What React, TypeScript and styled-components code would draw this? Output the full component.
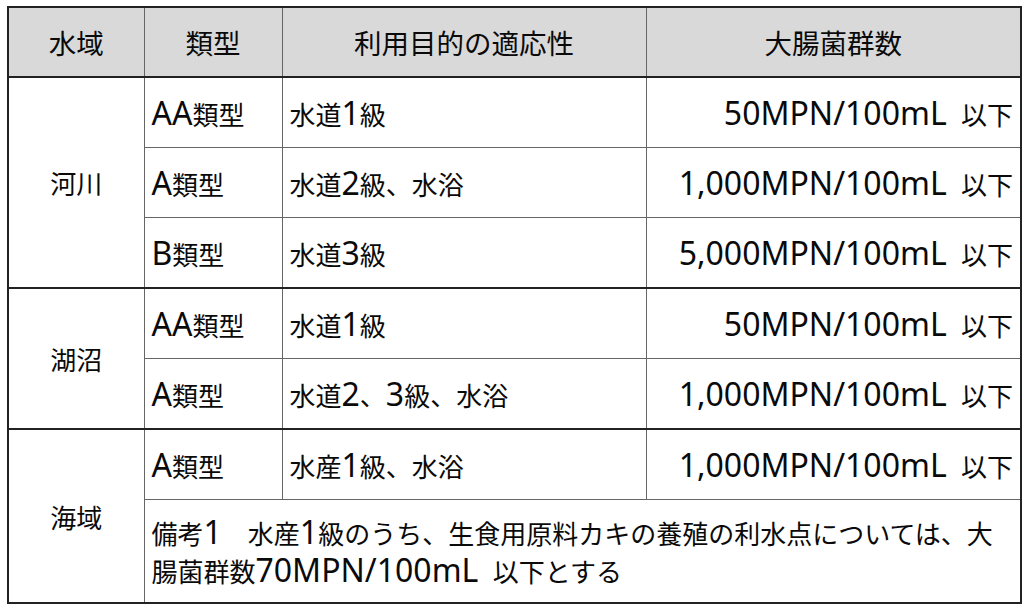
import React from "react";
import styled, { createGlobalStyle } from "styled-components";

const Global = createGlobalStyle`
  html, body { margin: 0; padding: 0; background: #ffffff; }
  body { font-family: "Noto Sans CJK JP", "Noto Sans", sans-serif; color: #0a0a0a; }
`;

const Page = styled.div`
  padding: 6px 0 0 7px;
  width: 1024px;
  height: 609px;
  box-sizing: border-box;
`;

const Table = styled.table`
  border-collapse: collapse;
  width: 1013px;
  table-layout: fixed;
  border: 2px solid #222;
  font-size: 26px;
  line-height: 37px;
`;

const HeadCell = styled.th`
  background: #d9d9d9;
  font-weight: 400;
  font-size: 27.5px;
  height: 68px;
  padding: 0;
  text-align: center;
  vertical-align: middle;
  border: 1px solid #666;
  border-bottom: 2px solid #222;
  border-top: 2px solid #222;
`;

const Cell = styled.td<{ $align?: "left" | "center" | "right"; $groupStart?: boolean; $tall?: boolean }>`
  height: ${(p) => (p.$tall ? "102px" : "69px")};
  padding: 0 7px;
  text-align: ${(p) => p.$align ?? "left"};
  vertical-align: middle;
  white-space: nowrap;
  overflow: hidden;
  border: 1px solid #666;
  ${(p) => (p.$groupStart ? "border-top: 2px solid #222;" : "")}
`;

const Latin = styled.span`
  font-family: "Noto Sans", "Open Sans", sans-serif;
  font-size: 32px;
  word-spacing: 6px;
`;

function T({ text }: { text: string }) {
  const parts = text.split(/([\x20-\x7E]+)/).filter((s) => s.length > 0);
  return (
    <>
      {parts.map((p, i) =>
        /^[\x20-\x7E]+$/.test(p) ? <Latin key={i}>{p}</Latin> : <React.Fragment key={i}>{p}</React.Fragment>
      )}
    </>
  );
}

type Row = { type: string; use: string; count: string };
type Group = { area: string; rows: Row[]; note?: string[] };

const groups: Group[] = [
  {
    area: "河川",
    rows: [
      { type: "AA類型", use: "水道1級", count: "50MPN/100mL 以下" },
      { type: "A類型", use: "水道2級、水浴", count: "1,000MPN/100mL 以下" },
      { type: "B類型", use: "水道3級", count: "5,000MPN/100mL 以下" },
    ],
  },
  {
    area: "湖沼",
    rows: [
      { type: "AA類型", use: "水道1級", count: "50MPN/100mL 以下" },
      { type: "A類型", use: "水道2、3級、水浴", count: "1,000MPN/100mL 以下" },
    ],
  },
  {
    area: "海域",
    rows: [{ type: "A類型", use: "水産1級、水浴", count: "1,000MPN/100mL 以下" }],
    note: [
      "備考1　水産1級のうち、生食用原料カキの養殖の利水点については、大",
      "腸菌群数70MPN/100mL 以下とする",
    ],
  },
];

export default function App() {
  return (
    <Page>
      <Global />
      <Table>
        <colgroup>
          <col style={{ width: 136 }} />
          <col style={{ width: 138 }} />
          <col style={{ width: 364 }} />
          <col style={{ width: 375 }} />
        </colgroup>
        <thead>
          <tr>
            <HeadCell>水域</HeadCell>
            <HeadCell>類型</HeadCell>
            <HeadCell>利用目的の適応性</HeadCell>
            <HeadCell>大腸菌群数</HeadCell>
          </tr>
        </thead>
        <tbody>
          {groups.map((g, gi) => {
            const span = g.rows.length + (g.note ? 1 : 0);
            return (
              <React.Fragment key={g.area}>
                {g.rows.map((r, ri) => (
                  <tr key={ri}>
                    {ri === 0 && (
                      <Cell rowSpan={span} $align="center" $groupStart={gi > 0}>
                        {g.area}
                      </Cell>
                    )}
                    <Cell $groupStart={gi > 0 && ri === 0}>
                      <T text={r.type} />
                    </Cell>
                    <Cell $groupStart={gi > 0 && ri === 0}>
                      <T text={r.use} />
                    </Cell>
                    <Cell $align="right" $groupStart={gi > 0 && ri === 0}>
                      <T text={r.count} />
                    </Cell>
                  </tr>
                ))}
                {g.note && (
                  <tr>
                    <Cell colSpan={3} $tall>
                      {g.note.map((line, li) => (
                        <div key={li}>
                          <T text={line} />
                        </div>
                      ))}
                    </Cell>
                  </tr>
                )}
              </React.Fragment>
            );
          })}
        </tbody>
      </Table>
    </Page>
  );
}
